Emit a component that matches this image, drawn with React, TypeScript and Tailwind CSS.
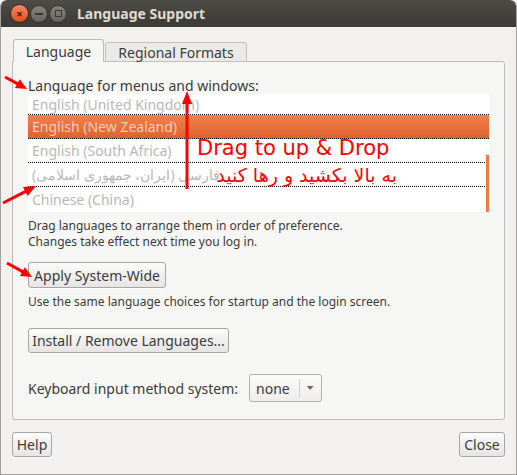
import React from "react";

type ArrowProps = { x1: number; y1: number; x2: number; y2: number; w?: number; head?: number; hw?: number };

function Arrow({ x1, y1, x2, y2, w = 3, head = 12, hw = 5 }: ArrowProps) {
  const dx = x2 - x1;
  const dy = y2 - y1;
  const len = Math.sqrt(dx * dx + dy * dy);
  const ux = dx / len;
  const uy = dy / len;
  const bx = x2 - ux * head;
  const by = y2 - uy * head;
  const nx = -uy;
  const ny = ux;
  const pts = `${x2},${y2} ${bx + nx * hw},${by + ny * hw} ${bx - nx * hw},${by - ny * hw}`;
  return (
    <g>
      <line x1={x1} y1={y1} x2={bx + ux * 2} y2={by + uy * 2} stroke="#ff0000" strokeWidth={w} />
      <polygon points={pts} fill="#ff0000" />
    </g>
  );
}

function GtkButton({ children, className = "" }: { children: React.ReactNode; className?: string }) {
  return (
    <div
      className={
        "flex items-center justify-center rounded-[3px] border border-[#a8a6a2] bg-gradient-to-b from-[#fbfbfa] to-[#e6e5e3] text-[14px] text-[#3c3c3c] shadow-[0_1px_0_rgba(255,255,255,0.8)] " +
        className
      }
    >
      {children}
    </div>
  );
}

export default function App() {
  const rowText = "text-[14px] text-[#b8b8b8] pl-[4px] flex items-center whitespace-nowrap overflow-hidden";
  return (
    <div className="relative w-[517px] h-[475px] overflow-hidden font-['Noto_Sans',sans-serif]">
      <div className="flex flex-col w-[517px] h-[475px] rounded-t-[6px] bg-[#f2f1f0] border-x border-b border-[#a3a19d] overflow-hidden">
        {/* Title bar */}
        <div className="h-[27px] shrink-0 flex items-center bg-gradient-to-b from-[#4e4c47] to-[#3b3a36] rounded-t-[6px]">
          <div className="flex items-center ml-[9px] gap-[1px]">
            <div className="w-[19px] h-[19px] rounded-full bg-gradient-to-b from-[#f58a5e] to-[#df4a1c] border border-[#3a2a22] flex items-center justify-center text-[#3a1a0c] text-[11px] font-bold leading-none">
              ×
            </div>
            <div className="w-[18px] h-[18px] rounded-full bg-gradient-to-b from-[#85837d] to-[#67655f] border border-[#363531] flex items-center justify-center">
              <div className="w-[8px] h-[2px] bg-[#3a3935]" />
            </div>
            <div className="w-[18px] h-[18px] rounded-full bg-gradient-to-b from-[#85837d] to-[#67655f] border border-[#363531] flex items-center justify-center">
              <div className="w-[7px] h-[7px] border-[1.5px] border-[#3a3935]" />
            </div>
          </div>
          <div className="ml-[10px] text-[14px] font-bold text-[#dfdbd2] leading-none">Language Support</div>
        </div>

        {/* Body */}
        <div className="flex-1 flex flex-col px-[11px] pt-[12px]">
          {/* Tabs */}
          <div className="flex items-end h-[23px] pl-[1px] relative z-10">
            <div className="h-[23px] w-[91px] flex items-center justify-center border border-b-0 border-[#bebbb6] rounded-t-[3px] bg-[#f6f6f5] text-[14px] text-[#3c3c3c]">
              Language
            </div>
            <div className="h-[20px] w-[142px] ml-[1px] flex items-center justify-center border border-[#c4c1bc] rounded-t-[3px] bg-[#ebeae8] text-[14px] text-[#3c3c3c]">
              Regional Formats
            </div>
          </div>
          {/* Panel */}
          <div className="-mt-[1px] h-[359px] border border-[#bebbb6] rounded-[3px] rounded-tl-none bg-[#f6f6f5] flex flex-col px-[15px] pt-[15px]">
            <div className="h-[17px] leading-[17px] text-[14px] text-[#3c3c3c]">Language for menus and windows:</div>
            <div className="relative h-[118px] bg-white flex flex-col overflow-hidden">
              <div className={rowText + " h-[21px] border-b border-dotted border-black"}>English (United Kingdom)</div>
              <div className={rowText + " h-[24px] border-b border-dotted border-black bg-gradient-to-b from-[#f0814f] to-[#e0622d] text-[#f7cdb6]"}>
                English (New Zealand)
              </div>
              <div className={rowText + " h-[24px] border-b border-dotted border-black"}>English (South Africa)</div>
              <div className={rowText + " h-[24px] border-b border-dotted border-black"}>
                <span dir="ltr">فارسی (ایران، جمهوری اسلامی)</span>
              </div>
              <div className={rowText + " h-[24px]"}>Chinese (China)</div>
              <div className="absolute right-0 top-[61px] w-[3px] h-[57px] bg-[#ec7a47]" />
            </div>
            <div className="mt-[6px] text-[12px] leading-[16px] text-[#3c3c3c]">
              <div>Drag languages to arrange them in order of preference.</div>
              <div>Changes take effect next time you log in.</div>
            </div>
            <div className="mt-[12px] flex">
              <GtkButton className="h-[26px] w-[138px]">Apply System-Wide</GtkButton>
            </div>
            <div className="mt-[6px] text-[12px] leading-[16px] text-[#3c3c3c]">
              Use the same language choices for startup and the login screen.
            </div>
            <div className="mt-[18px] flex">
              <GtkButton className="h-[25px] w-[201px]">Install / Remove Languages...</GtkButton>
            </div>
            <div className="mt-[21px] flex items-center h-[28px]">
              <div className="text-[14px] text-[#3c3c3c]">Keyboard input method system:</div>
              <div className="ml-[11px] h-[28px] w-[73px] flex items-center rounded-[3px] border border-[#b3b1ad] bg-gradient-to-b from-[#fbfbfa] to-[#eeedeb]">
                <span className="ml-[6px] text-[14px] text-[#3c3c3c] w-[44px]">none</span>
                <div className="w-[1px] h-[18px] bg-[#cfcdc9]" />
                <svg width="22" height="10" viewBox="0 0 22 10">
                  <polygon points="7,3 14,3 10.5,7" fill="#6a6a6a" />
                </svg>
              </div>
            </div>
          </div>
          {/* Footer */}
          <div className="flex justify-between mt-[12px]">
            <GtkButton className="h-[25px] w-[40px]">Help</GtkButton>
            <GtkButton className="h-[25px] w-[46px]">Close</GtkButton>
          </div>
        </div>
      </div>

      {/* Annotations overlay */}
      <div className="absolute left-[197px] top-[136px] text-[21px] leading-[25px] text-[#ff0000] font-['DejaVu_Sans',sans-serif] whitespace-nowrap">
        Drag to up &amp; Drop
      </div>
      <div
        dir="rtl"
        className="absolute left-[197px] top-[162px] w-[200px] text-[19px] leading-[26px] text-[#ff0000] font-['DejaVu_Sans',sans-serif] whitespace-nowrap"
      >
        به بالا بکشید و رها کنید
      </div>
      <svg className="absolute inset-0 pointer-events-none" width="517" height="475" viewBox="0 0 517 475">
        <Arrow x1={187} y1={189} x2={187} y2={91} w={3} head={13} hw={5} />
        <Arrow x1={5} y1={77} x2={27} y2={89} w={3} head={11} hw={5} />
        <Arrow x1={3} y1={203} x2={36} y2={186} w={3} head={12} hw={5} />
        <Arrow x1={7} y1={263} x2={32} y2={277} w={3} head={11} hw={5} />
      </svg>
    </div>
  );
}
